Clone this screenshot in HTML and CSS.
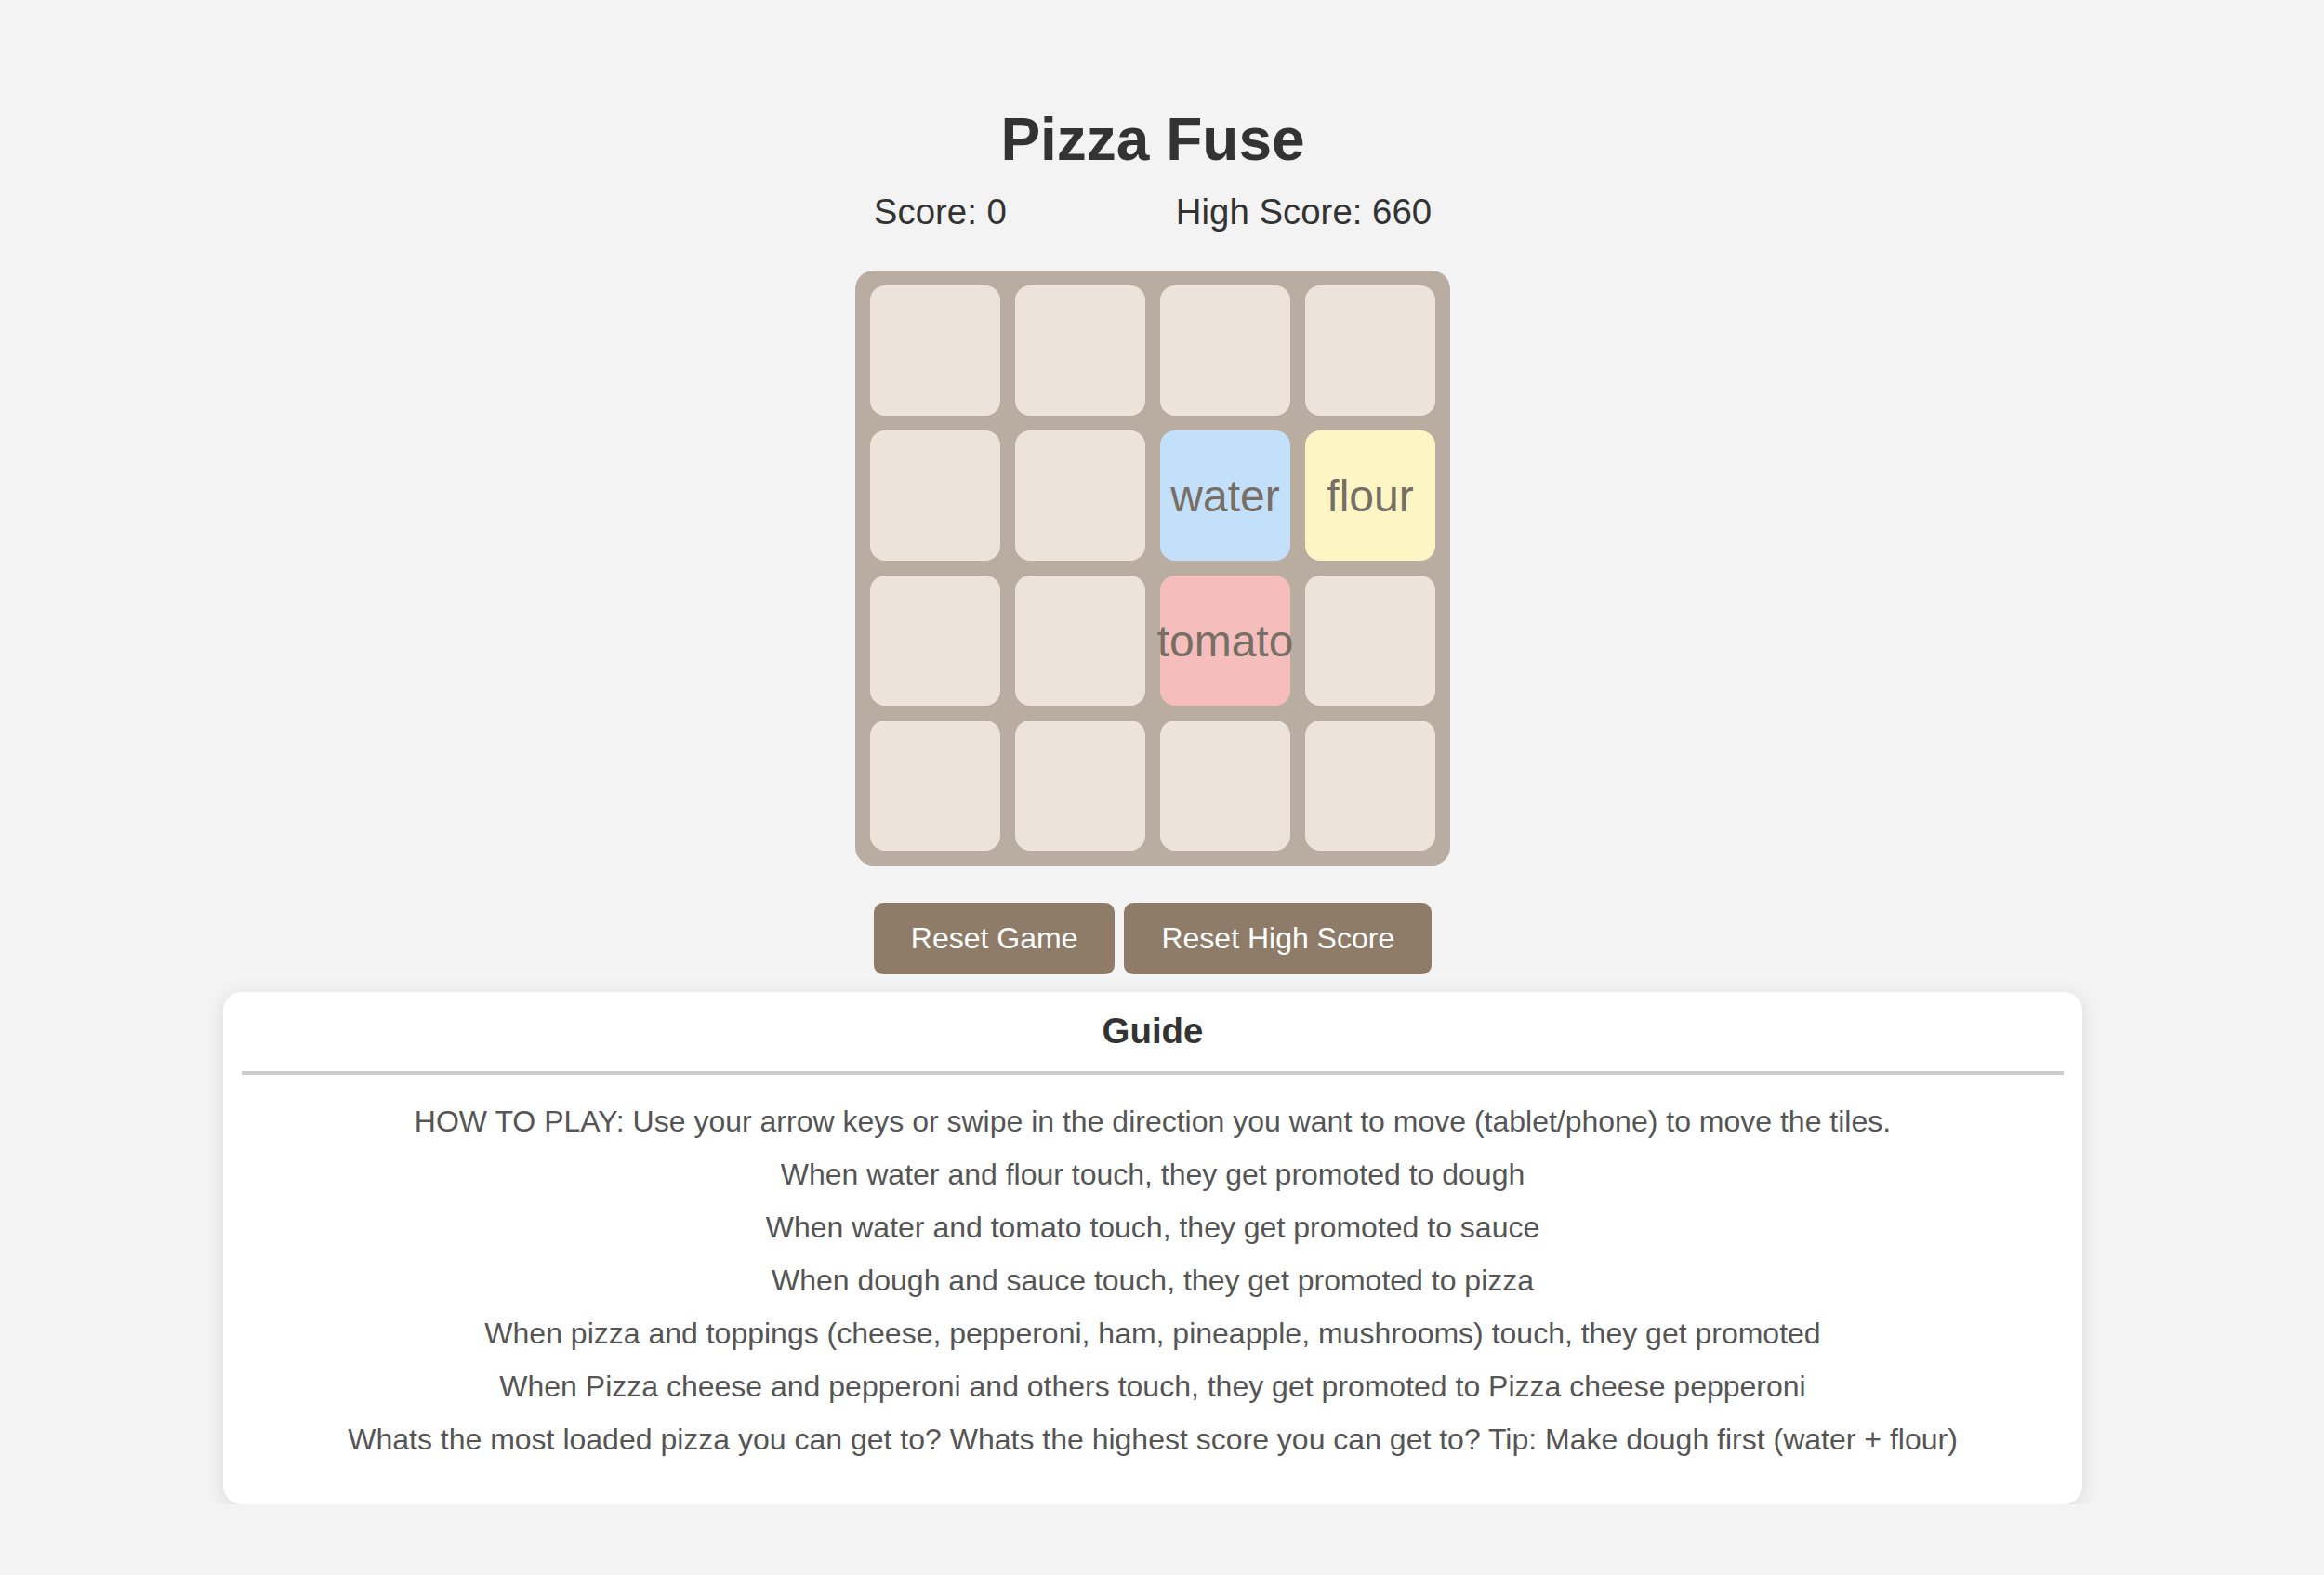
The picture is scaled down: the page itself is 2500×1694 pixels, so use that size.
FILE: index.html
```html
<!DOCTYPE html>
<html lang="en">
<head>
<meta charset="utf-8">
<title>Pizza Fuse</title>
<link rel="stylesheet" href="styles.css">
</head>
<body>
<div class="page">
  <h1 class="title">Pizza Fuse</h1>
  <div class="scores">
    <span class="score">Score: 0</span>
    <span class="score">High Score: 660</span>
  </div>
  <div class="board">
    <div class="cell"></div>
    <div class="cell"></div>
    <div class="cell"></div>
    <div class="cell"></div>
    <div class="cell"></div>
    <div class="cell"></div>
    <div class="cell tile-water">water</div>
    <div class="cell tile-flour">flour</div>
    <div class="cell"></div>
    <div class="cell"></div>
    <div class="cell tile-tomato">tomato</div>
    <div class="cell"></div>
    <div class="cell"></div>
    <div class="cell"></div>
    <div class="cell"></div>
    <div class="cell"></div>
  </div>
  <div class="buttons">
    <button class="btn">Reset Game</button>
    <button class="btn">Reset High Score</button>
  </div>
  <div class="guide">
    <h2 class="guide-title">Guide</h2>
    <hr class="guide-rule">
    <p class="guide-line">HOW TO PLAY: Use your arrow keys or swipe in the direction you want to move (tablet/phone) to move the tiles.</p>
    <p class="guide-line">When water and flour touch, they get promoted to dough</p>
    <p class="guide-line">When water and tomato touch, they get promoted to sauce</p>
    <p class="guide-line">When dough and sauce touch, they get promoted to pizza</p>
    <p class="guide-line">When pizza and toppings (cheese, pepperoni, ham, pineapple, mushrooms) touch, they get promoted</p>
    <p class="guide-line">When Pizza cheese and pepperoni and others touch, they get promoted to Pizza cheese pepperoni</p>
    <p class="guide-line">Whats the most loaded pizza you can get to? Whats the highest score you can get to? Tip: Make dough first (water + flour)</p>
  </div>
</div>
</body>
</html>
```

FILE: styles.css
```css
html, body {
  margin: 0;
  padding: 0;
  background: #f3f3f3;
}

body {
  font-family: "Liberation Sans", Arial, Helvetica, sans-serif;
  color: #333;
}

.page {
  width: 2480px;
  padding-top: 113px;
  display: flex;
  flex-direction: column;
  align-items: center;
}

.title {
  margin: 0;
  font-size: 64px;
  line-height: 74px;
  font-weight: bold;
  color: #333;
}

.scores {
  margin-top: 19px;
  display: flex;
  gap: 182px;
  font-size: 38.4px;
  line-height: 44px;
  color: #333;
}

.board {
  margin-top: 41px;
  width: 640px;
  height: 640px;
  box-sizing: border-box;
  padding: 16px;
  background: #b9ada1;
  border-radius: 20px;
  display: grid;
  grid-template-columns: repeat(4, 140px);
  grid-template-rows: repeat(4, 140px);
  gap: 16px;
}

.cell {
  background: #ece4db;
  border-radius: 16px;
  display: flex;
  align-items: center;
  justify-content: center;
  font-size: 48px;
  color: #776e65;
  white-space: nowrap;
}

.tile-water {
  background: #c3e0fb;
}

.tile-flour {
  background: #fdf6c4;
}

.tile-tomato {
  background: #f5bdbc;
}

.buttons {
  margin-top: 40px;
  display: flex;
  gap: 10px;
}

.btn {
  margin: 0;
  border: none;
  padding: 20px 40px;
  background: #8e7c69;
  color: #fff;
  font-family: "Liberation Sans", Arial, Helvetica, sans-serif;
  font-size: 32px;
  line-height: 37px;
  border-radius: 10px;
}

.guide {
  margin-top: 19px;
  width: 2000px;
  box-sizing: border-box;
  padding: 20px 20px 51px;
  background: #fff;
  border-radius: 20px;
  box-shadow: 0 4px 20px rgba(0, 0, 0, 0.1);
  text-align: center;
}

.guide-title {
  margin: 0;
  font-size: 38.4px;
  line-height: 44px;
  font-weight: bold;
  color: #333;
}

.guide-rule {
  margin: 21px 0 32px;
  border: none;
  height: 4px;
  background: #ccc;
}

.guide-line {
  margin: 0 0 20px;
  font-size: 32px;
  line-height: 37px;
  color: #555;
}

.guide-line:last-child {
  margin-bottom: 0;
}
```
